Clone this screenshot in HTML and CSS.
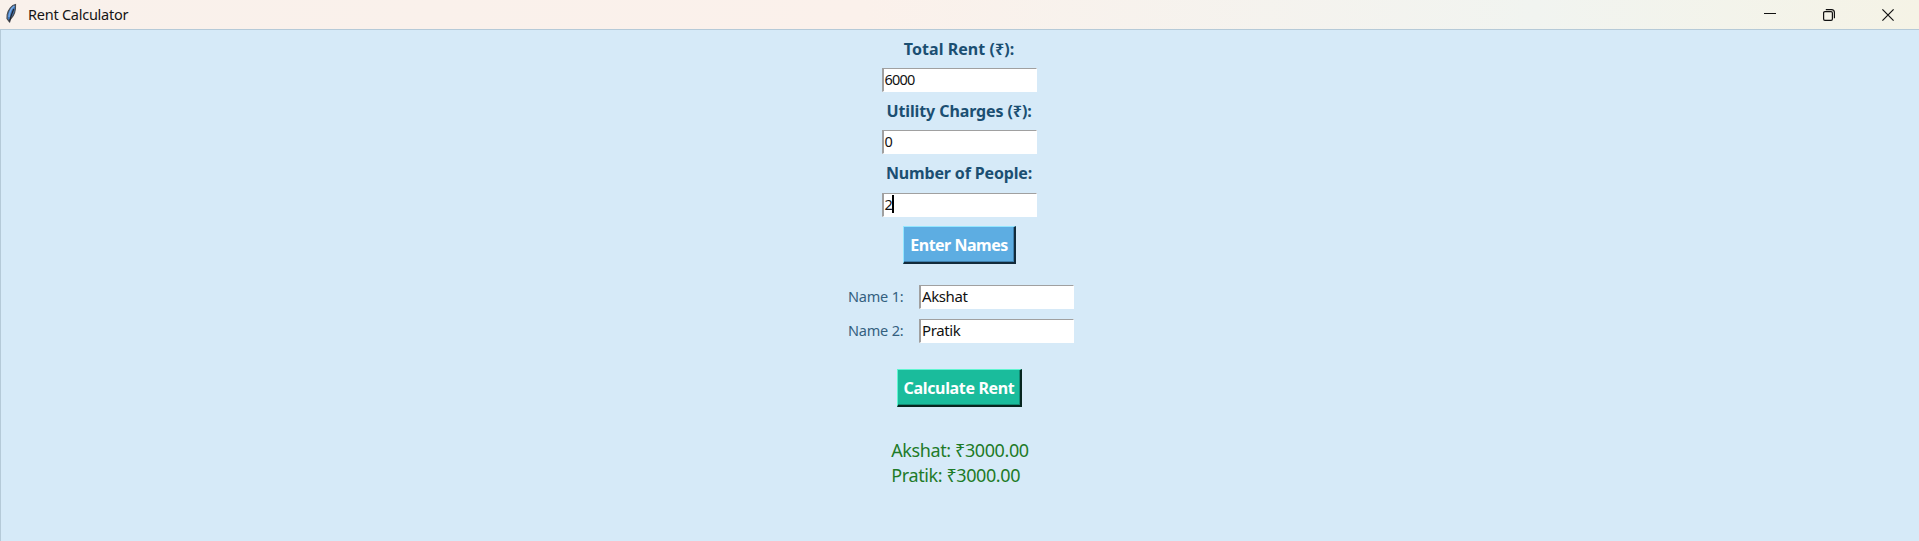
FILE: index.html
```html
<!DOCTYPE html>
<html lang="en">
<head>
<meta charset="utf-8">
<title>Rent Calculator</title>
<link rel="stylesheet" href="styles.css">
</head>
<body>
<header class="titlebar">
  <svg class="feather" width="13" height="22" viewBox="0 0 13 22">
    <path d="M10.500 1.500C7 2 3.200 6.500 2.200 11.500L2 15.500L3.800 18L6 15.500C9.500 12 10.800 7 10.500 1.500Z" fill="#3f78bc" stroke="#4a4d52" stroke-width="1.200"/>
    <path d="M9.300 3C6.500 5 4.500 9 4 14" fill="none" stroke="#78aae6" stroke-width="1.500"/>
    <path d="M8.800 6C7 10 5.500 13 4.500 19.500" fill="none" stroke="#22252c" stroke-width="1.200"/>
  </svg>
  <span class="title">Rent Calculator</span>
  <div class="controls">
    <svg width="12" height="12" viewBox="0 0 12 12"><path d="M0 4.500H12" stroke="#111" fill="none"/></svg>
    <svg width="12" height="12" viewBox="0 0 12 12"><g stroke="#111" stroke-width="1.200" fill="none"><rect x=".6" y="2.600" width="8.800" height="8.800" rx="1.300"/><path d="M2.800 .6H8.500Q11.400 .6 11.400 3.500V9.200"/></g></svg>
    <svg width="12" height="12" viewBox="0 0 12 12"><path d="M.4 .4L11.600 11.600M11.600 .4L.4 11.600" stroke="#111" stroke-width="1.200" fill="none"/></svg>
  </div>
</header>
<main class="window">
  <div class="label rent">Total Rent (₹):</div>
  <div class="entry">6000</div>
  <div class="label utility">Utility Charges (₹):</div>
  <div class="entry">0</div>
  <div class="label people">Number of People:</div>
  <div class="entry">2<i class="caret"></i></div>
  <div class="button names-button"><span>Enter Names</span></div>
  <div class="names">
    <span class="name">Name 1:</span><div class="entry">Akshat</div>
    <span class="name">Name 2:</span><div class="entry">Pratik</div>
  </div>
  <div class="button calc-button"><span>Calculate Rent</span></div>
  <div class="result"><div>Akshat: ₹3000.00</div><div>Pratik: ₹3000.00</div></div>
</main>
</body>
</html>
```
FILE: styles.css
```css
* { box-sizing: border-box; }
body {
  margin: 0;
  height: 541px;
  overflow: hidden;
  display: flex;
  flex-direction: column;
  font-family: "Noto Sans", "Open Sans", sans-serif;
  white-space: nowrap;
}
.titlebar {
  height: 29px;
  flex: none;
  display: flex;
  align-items: center;
  padding: 0 25px 0 5px;
  background: linear-gradient(90deg, #f9f1eb 0%, #fbf1eb 45%, #f1f4f0 80%, #f5f3e6 100%);
}
.feather { margin-top: -1px; }
.title { margin-left: 10px; padding-bottom: 2px; font-size: 14.5px; letter-spacing: -.25px; color: #151515; }
.controls { margin-left: auto; display: flex; gap: 47px; }
.window {
  flex: 1;
  display: flex;
  flex-direction: column;
  align-items: center;
  background: #d6eaf8;
  border-top: 1px solid #b5cad8;
  border-left: 1px solid #b5cad8;
  padding: 7px 2px 0 0;
}
.label {
  height: 24px;
  line-height: 24px;
  margin-bottom: 7px;
  font-size: 16px;
  font-weight: 700;
  color: #1b4f72;
}
.rent { letter-spacing: .05px; }
.utility { letter-spacing: -.1px; }
.people { letter-spacing: -.15px; margin-bottom: 8px; }
.entry {
  display: flex;
  align-items: center;
  width: 155px;
  height: 24px;
  padding: 0 0 2px 1px;
  background: #fff;
  border: 2px solid;
  border-color: #a0a0a0 #fff #fff #a0a0a0;
  border-width: 1px 1px 1px 2px;
  font-size: 14.5px;
  letter-spacing: -.8px;
  color: #111;
}
.window > .entry { margin-bottom: 7px; }
.caret { width: 2px; height: 18px; background: #000; }
.button {
  display: flex;
  align-items: center;
  justify-content: center;
  height: 38px;
  padding: 1px 0 0 1px;
  color: #fff;
  border: 2px solid;
  font-size: 16px;
  font-weight: 700;
}
.names-button {
  width: 113px;
  margin-top: 2px;
  letter-spacing: -.5px;
  background: #5dade2;
  border-color: #93e6ff #132b3b #132b3b #93e6ff;
  border-width: 1px 2px 2px 1px;
  box-shadow: inset -1px -1px #3f80ae;
}
.names {
  display: grid;
  grid-template-columns: 71px 155px;
  row-gap: 10px;
  align-items: center;
  margin: 21px 0 0 4px;
}
.names .entry { font-size: 15px; letter-spacing: -.4px; }
.name { padding-bottom: 2px; font-size: 14.5px; letter-spacing: -.2px; color: #34607f; }
.calc-button {
  width: 125px;
  margin-top: 26px;
  letter-spacing: -.35px;
  background: #1abc9c;
  border-color: #60f5d0 #07251f #07251f #60f5d0;
  border-width: 1px 2px 2px 1px;
  box-shadow: inset -1px -1px #128b73;
}
.result {
  margin: 31px 0 0 2px;
  font-size: 18px;
  letter-spacing: -.4px;
  line-height: 25px;
  color: #1e7b28;
}
```
